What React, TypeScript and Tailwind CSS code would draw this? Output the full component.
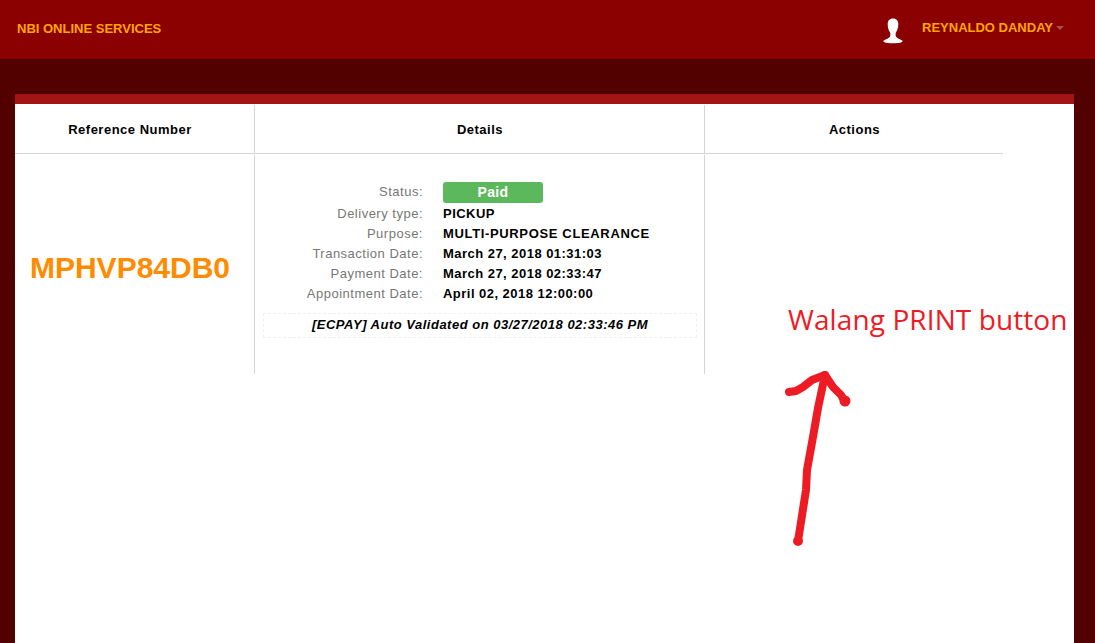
import React from 'react';

const details = [
  { label: 'Delivery type:', value: 'PICKUP', spacing: 'tracking-[0.47px]' },
  { label: 'Purpose:', value: 'MULTI-PURPOSE CLEARANCE', spacing: 'tracking-[0.65px]' },
  { label: 'Transaction Date:', value: 'March 27, 2018 01:31:03', spacing: 'tracking-[0.47px]' },
  { label: 'Payment Date:', value: 'March 27, 2018 02:33:47', spacing: 'tracking-[0.47px]' },
  { label: 'Appointment Date:', value: 'April 02, 2018 12:00:00', spacing: 'tracking-[0.47px]' },
];

const App: React.FC = () => {
  return (
    <div className="relative flex flex-col h-[643px] overflow-hidden bg-[#530000] font-['Liberation_Sans',Arial,sans-serif]">
      {/* Top nav */}
      <div className="flex h-[59px] shrink-0 items-center justify-between bg-[#8b0000] pl-[17px] pr-[31px]">
        <span className="text-[13px] font-bold text-[#ffa500] -mt-[2px]">NBI ONLINE SERVICES</span>
        <div className="flex items-center -mt-[4px]">
          <svg width="20" height="26" viewBox="0 0 20 26" className="mr-[19px] mt-[7px]">
            <path d="M10 .5c3.600 0 5.300 2.300 5.300 5.800 0 3.300-.9 6.200-2.100 7.800-.8 1.100-.8 3.600-.1 4.700.8 1.200 3.900 2.700 6 3.600.7.300.6 1.200-.1 1.500-2.200 1-5.400 1.400-9 1.400s-6.800-.4-9-1.400c-.7-.3-.8-1.200-.1-1.500 2.100-.9 5.200-2.400 6-3.600.7-1.100.7-3.600-.1-4.700-1.200-1.600-2.100-4.500-2.100-7.800C4.700 2.800 6.400.5 10 .5z" fill="#fff" />
          </svg>
          <span className="text-[13px] font-bold text-[#ffa500]">REYNALDO DANDAY</span>
          <span className="ml-[3px] h-0 w-0 border-x-[4px] border-t-[4px] border-x-transparent border-t-[#a85050]" />
        </div>
      </div>

      {/* Panel */}
      <div className="ml-[15px] mr-[21px] mt-[35px] flex-1 border-t-[10px] border-[#a31515] bg-white text-[13px] text-black">
        <div className="w-[988px]">
          <div className="grid h-[50px] grid-cols-[240px_450px_298px] border-b border-[#d4d4d4] pt-[1px] font-bold tracking-[0.5px]">
            <div className="flex items-center justify-center border-r border-[#d4d4d4] pr-[9px] pt-[1px]">Reference Number</div>
            <div className="flex items-center justify-center border-r border-[#d4d4d4] pl-[1px] pt-[1px]">Details</div>
            <div className="flex items-center justify-center pl-[1px] pt-[1px]">Actions</div>
          </div>
          <div className="grid h-[220px] grid-cols-[240px_450px_298px] pt-[1px]">
            <div className="flex items-center justify-center border-r border-[#d4d4d4] pr-[9px] pt-[5px] text-[30px] font-bold text-[#ff8c00]">MPHVP84DB0</div>
            <div className="border-r border-[#d4d4d4] px-[8px] pt-[27px]">
              <div className="grid grid-cols-[160px_1fr] gap-x-[20px]">
                <div className="h-[22px] text-right leading-[20px] tracking-[0.5px] text-[#777]">Status:</div>
                <div>
                  <span className="block h-[21px] w-[100px] rounded-[3px] bg-[#5cb85c] text-center text-[14px] font-bold leading-[20px] tracking-[0.3px] text-white">Paid</span>
                </div>
                {details.map(d => (
                  <React.Fragment key={d.label}>
                    <div className="h-[20px] text-right leading-[20px] tracking-[0.5px] text-[#777]">{d.label}</div>
                    <div className={`h-[20px] font-bold leading-[20px] ${d.spacing}`}>{d.value}</div>
                  </React.Fragment>
                ))}
              </div>
              <div className="mr-[-1px] mt-[9px] h-[25px] border border-dashed border-[#f0f0f0] text-center font-bold italic leading-[22px] tracking-[0.5px]">
                [ECPAY] Auto Validated on 03/27/2018 02:33:46 PM
              </div>
            </div>
            <div />
          </div>
        </div>
      </div>

      {/* Red annotation drawn over the page */}
      <span className="absolute left-[788px] top-[301px] whitespace-nowrap font-['Open_Sans',sans-serif] text-[28px] leading-[37px] tracking-[0.1px] text-[#ed1c24]">Walang PRINT button</span>
      <svg className="absolute left-[780px] top-[365px]" width="75" height="190" viewBox="780 365 75 190" fill="none" stroke="#ed1c24" strokeWidth="8" strokeLinecap="round" strokeLinejoin="round">
        <path d="M798 541 L801 522 L806 490 L807 470 L813 437 L818 408 L825 375" />
        <path d="M789 392 L796 391 L803 387 L812 380 L825 375 L833 387 L841 395 L845 402" />
        <circle cx="845" cy="401" r="1.500" />
        <circle cx="798" cy="541" r="1" />
      </svg>
    </div>
  );
};

export default App;
